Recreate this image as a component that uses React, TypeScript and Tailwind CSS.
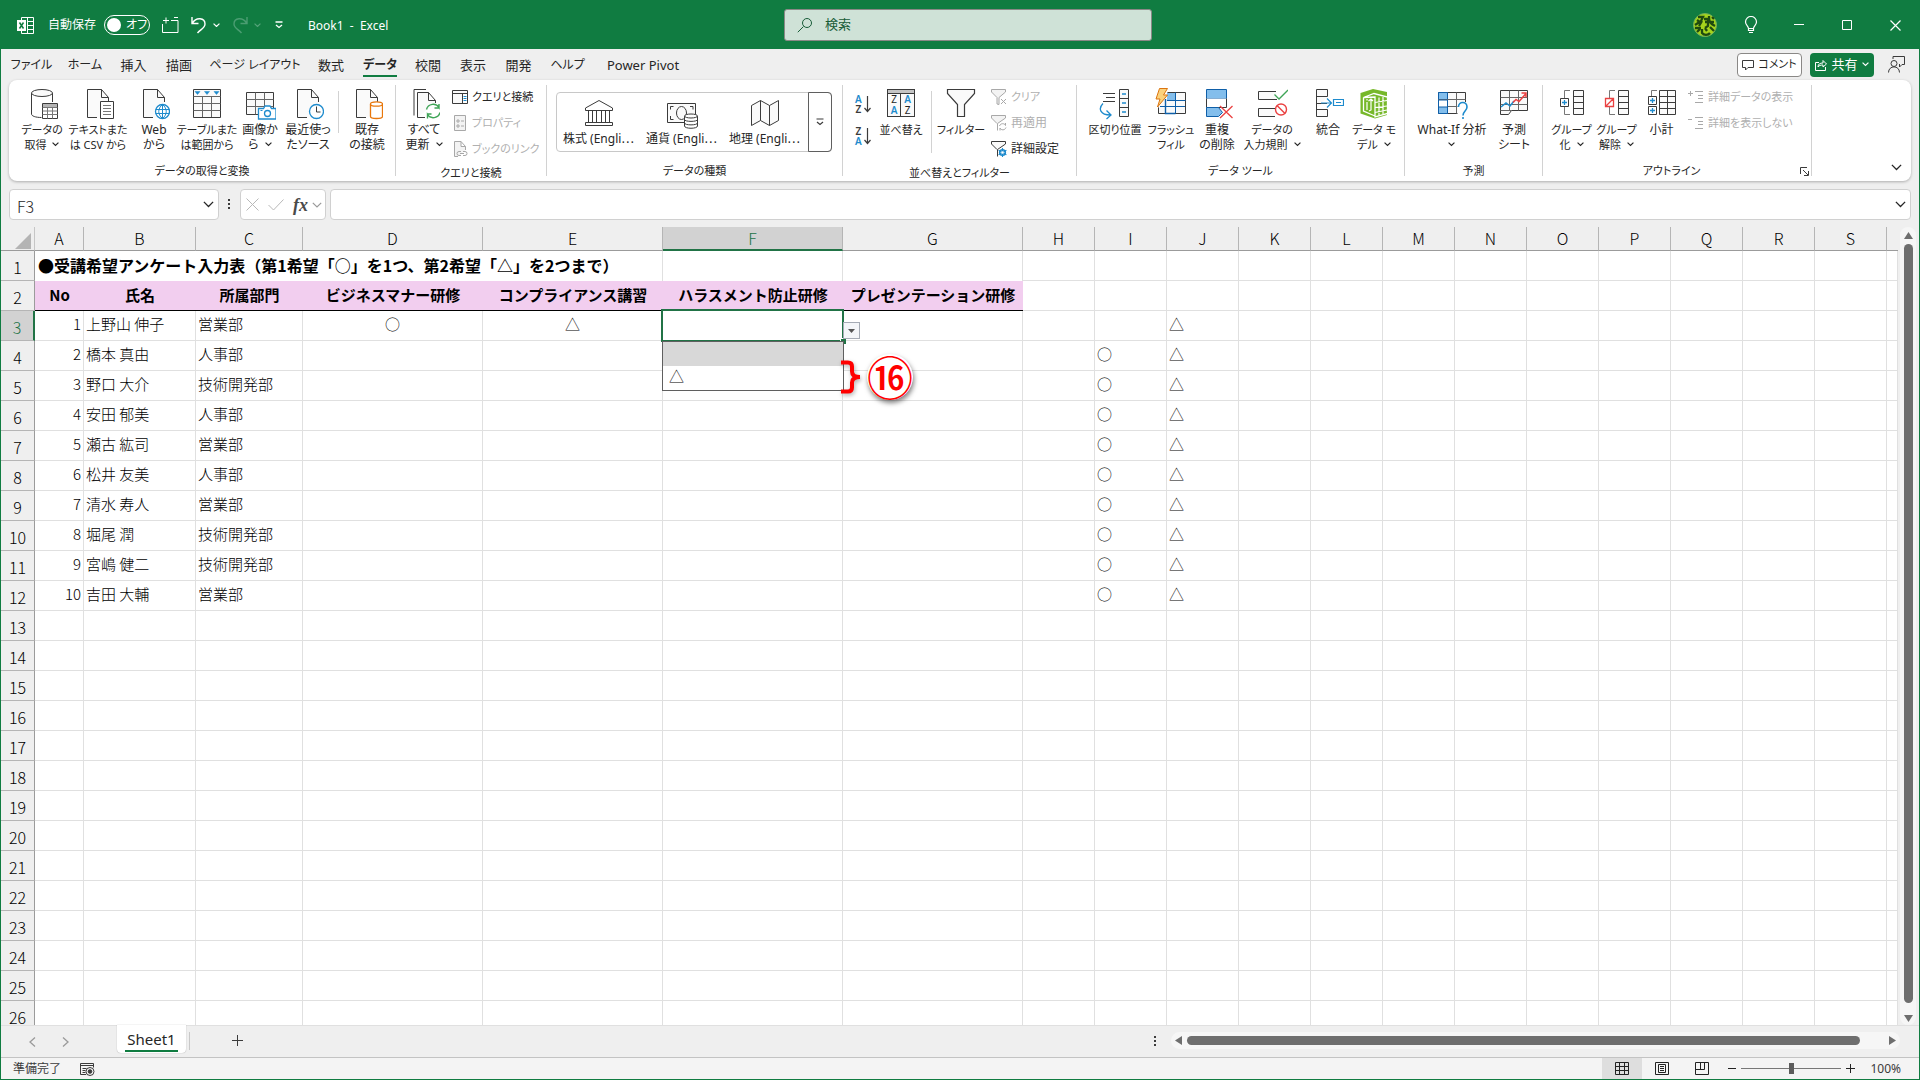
import type { ReactNode } from 'react';

type IconProps = { children: ReactNode; w?: number; h?: number; color?: string; className?: string };

function Icon({ children, w = 32, h = 32, color = '#3b3b3b', className = '' }: IconProps) {
  return (
    <svg width={w} height={h} viewBox={`0 0 ${w} ${h}`} fill="none" stroke={color} className={`shrink-0 ${className}`} aria-hidden>
      {children}
    </svg>
  );
}

function Chevron({ className = '', w = 7 }: { className?: string; w?: number }) {
  return (
    <svg
      width={w}
      height={w * 0.6}
      viewBox="0 0 10 6"
      fill="none"
      stroke="currentColor"
      strokeWidth={w > 8 ? 1.2 : 1.7}
      className={`inline-block shrink-0 ${className}`}
      aria-hidden
    >
      <path d="M.8.8 5 5 9.2.8" />
    </svg>
  );
}

function Doc() {
  return (
    <>
      <path d="M5.5 1.5H19.5L26.5 9.5V29.5H5.5Z" fill="#fafafa" stroke="none" />
      <path d="M15 29.5H5.5V1.5H19.5L26.5 9.5V14" />
      <path d="M19.5 1.5V9.5H26.5" />
    </>
  );
}

const icons = {
  getData: (
    <Icon>
      <path d="M5.5 5v21c0 2 4 3.500 10 3.500M26.500 5v9" />
      <ellipse cx="16" cy="5" rx="10.500" ry="3.500" fill="#fafafa" />
      <path d="M16.500 15.500h15v15h-15z" fill="#fff" />
      <path d="M17 16h14v3H17z" fill="#b5b5b5" stroke="none" />
      <path d="M16.500 19.500h15M16.500 23h15M16.500 26.500h15M21.500 19.500v11M26.500 19.500v11" stroke="#777" />
    </Icon>
  ),
  textCsv: (
    <Icon>
      <Doc />
      <path d="M18.500 13.500h13v17h-13z" fill="#fff" />
      <path d="M21 17.500h8M21 20.500h8M21 23.500h8M21 26.500h8" stroke="#777" />
    </Icon>
  ),
  web: (
    <Icon>
      <Doc />
      <circle cx="24.500" cy="23.500" r="7" fill="#fff" stroke="#1e8bcd" strokeWidth="1.300" />
      <path d="M24.500 16.500v14M17.500 21.500h14M17.500 25.500h14M24.500 16.500c-5 4-5 10 0 14c5-4 5-10 0-14" stroke="#1e8bcd" />
    </Icon>
  ),
  table: (
    <Icon>
      <path d="M2.500 1.500h27v28h-27z" fill="#fafafa" />
      <path d="M2.500 8.500h27M2.500 15.500h27M2.500 22.500h27M11.500 8v21M20.500 8v21" stroke="#666" />
      <path d="M4 3.500h5l-2.500 3zM13.500 3.500h5l-2.500 3zM23 3.500h5l-2.500 3z" fill="#1e8bcd" stroke="#1e8bcd" strokeWidth=".5" />
    </Icon>
  ),
  picture: (
    <Icon>
      <path d="M2.500 4.500h27v22h-27z" fill="#fafafa" />
      <path d="M2.500 11.500h27M2.500 18.500h27M11.500 4.500v22M20.500 4.500v22" stroke="#666" />
      <path d="M14.500 20.500h5l1.500-2.500h5l1.500 2.500h4.500v10.500h-17.500z" fill="#fff" stroke="#1e8bcd" strokeWidth="1.300" />
      <circle cx="23.500" cy="25.500" r="3" stroke="#1e8bcd" strokeWidth="1.300" />
      <path d="M16.500 22.500h2" stroke="#1e8bcd" />
    </Icon>
  ),
  recent: (
    <Icon>
      <Doc />
      <circle cx="24.500" cy="23.500" r="7" fill="#fff" stroke="#1e8bcd" strokeWidth="1.300" />
      <path d="M24.500 18.500v5.500h4" />
    </Icon>
  ),
  existing: (
    <Icon>
      <Doc />
      <path d="M19.500 16v12.500c0 1.500 3 2 6 2s6-.5 6-2V16" fill="#fff" stroke="#e8770c" strokeWidth="1.300" />
      <ellipse cx="25.500" cy="16" rx="6" ry="2.200" fill="#fff" stroke="#e8770c" strokeWidth="1.300" />
    </Icon>
  ),
  refreshAll: (
    <Icon>
      <path d="M6 27.500V1.500H18" />
      <path d="M9.500 29.500V4.500H20.500L27.500 12.500V15M20.500 4.500V12.500H27.500M9.500 29.500H17" fill="#fafafa" />
      <path d="M18.500 21.500c1.500-6 9.500-7 12.500-2v-3.500M31 20h-4.500M32 24.500c-1.500 6-9.500 7-12.500 2v4M19 26h4.500" stroke="#3fa557" strokeWidth="1.400" />
    </Icon>
  ),
  bank: (
    <Icon>
      <path d="M2.500 13.500v-2.500L16 3.500l13.500 7.500v2.500zM5.500 13.500v12M9.500 13.500v12M13.500 13.500v12M18.500 13.500v12M22.500 13.500v12M26.500 13.500v12M2.500 28.500v-3h27v3z" />
    </Icon>
  ),
  currency: (
    <Icon>
      <path d="M1.500 6.500h28v19h-28z" fill="#fafafa" />
      <path d="M7.500 9.500h-3v3M4.500 19v3.500h3M24 9.500h3v3" />
      <ellipse cx="15.500" cy="16" rx="5" ry="6.500" />
      <path d="M18.500 19v10c0 3 13 3 13 0V19" fill="#fff" />
      <path d="M18.500 22.500c0 2.500 13 2.500 13 0M18.500 26c0 2.500 13 2.500 13 0" />
      <ellipse cx="25" cy="19" rx="6.500" ry="2" fill="#fff" />
    </Icon>
  ),
  map: (
    <Icon>
      <path d="M2.500 8.500 11.500 3.500 20.500 8.500 29.500 3.500V23.500L20.500 28.500 11.500 23.500 2.500 28.500ZM11.500 3.500v20M20.500 8.500v20" fill="#fafafa" />
    </Icon>
  ),
  filter: (
    <Icon>
      <path d="M2.500 1.500h27v4l-10 11v12h-7v-12l-10-11z" fill="#fafafa" strokeWidth="1.200" />
    </Icon>
  ),
  textToColumns: (
    <Icon>
      <path d="M4 5.500h12M7 9.500h9M4 13.500h12" />
      <path d="M4 15.500c-5 5-3 11.500 7.500 11.500M7.500 22.500l4.500 4.500-4.500 4" stroke="#1e8bcd" strokeWidth="1.300" />
      <path d="M20.500 1.500h9v27h-9zM20.500 10.500h9M20.500 19.500h9" fill="#fafafa" />
      <path d="M23 6h4M23 15h4M23 24h4" stroke="#1e8bcd" strokeWidth="1.300" />
    </Icon>
  ),
  flashFill: (
    <Icon>
      <path d="M3.500 4.500h27v21h-27z" fill="#fafafa" />
      <path d="M0 0h15L3.500 20z" fill="#fff" stroke="none" />
      <path d="M12 5h9v7h-9z" fill="#83beec" stroke="none" />
      <path d="M12 12.500h18.500M5 18.500h25M20.500 4.500v21" stroke="#0f5fa8" />
      <path d="M10.500 11v14.500h10" stroke="#0f5fa8" strokeWidth="1.400" />
      <path d="M4.500.5h8l-4 6.500h4L2.500 19l2.500-8H1z" fill="#fad27d" stroke="#dc7410" />
    </Icon>
  ),
  removeDuplicates: (
    <Icon>
      <path d="M5.500 1.500h20v9h-20z" fill="#83beec" stroke="#0f5fa8" />
      <path d="M5.500 10.500v9h20v-9" fill="#fff" />
      <path d="M5.500 19.500h12l4 5-4 4h-12z" fill="#83beec" stroke="#0f5fa8" />
      <path d="M19 18l12.500 12M31.500 18 19 30" stroke="#ea4141" strokeWidth="1.300" />
    </Icon>
  ),
  validation: (
    <Icon>
      <path d="M21 11.500H2.500V3.500H20M20 20.500H2.500v8H19" fill="#fafafa" />
      <path d="M18.500 6.500 23 11 32 2" stroke="#3fa557" strokeWidth="1.300" />
      <circle cx="25" cy="21.500" r="5.500" fill="#fff" stroke="#ea4141" strokeWidth="1.400" />
      <path d="M21 17.500l8 8" stroke="#ea4141" strokeWidth="1.400" />
    </Icon>
  ),
  consolidate: (
    <Icon>
      <path d="M15.500 8.500v-7H4.500v27h11v-7H4.500M15.500 8.500H4.500M15 15.500H5" fill="#fafafa" />
      <path d="M9 15h10M15 10.500l4.500 4.500-4.500 4.500M21.500 11.500h10v6h-10zM24 14.500h5" stroke="#1e8bcd" strokeWidth="1.200" />
    </Icon>
  ),
  dataModel: (
    <Icon>
      <path d="M2.500 5 15 1l14 3v23L17 30.500l-14.500-5z" fill="#77b82a" stroke="none" />
      <path d="M5.500 9.500 16 5.500l13.500 3.500v16.500L17 29V9zM5.500 9.500v13.500L17 28" stroke="#fff" strokeWidth="1.300" />
      <path d="M9 14v8M9 11v1.500M13 11v11l-2 1M10.500 13l2.500-2 2 2M21 9.500v18M25 9v17M17 14.500l12-2M17 19.500l12-1.500M17 24.500l12-2.500" stroke="#fff" strokeWidth="1.200" />
    </Icon>
  ),
  whatIf: (
    <Icon>
      <path d="M2.500 4.500h27v21h-27z" fill="#fafafa" />
      <path d="M2.500 4.500h9v21h-9z" fill="#83beec" stroke="#0f5fa8" />
      <path d="M2.500 11.500h27M2.500 18.500h27M20.500 4.500v21" stroke="#666" />
      <path d="M2.500 12h9v7h-9z" fill="#fff" stroke="#0f5fa8" />
      <path d="M21.500 14h10v17h-10z" fill="#fff" stroke="none" />
      <path d="M22.500 19c0-6 8.500-6 8.500 0 0 4-4 4-4 8.500M27 29v2" stroke="#1e8bcd" strokeWidth="1.600" />
    </Icon>
  ),
  forecast: (
    <Icon>
      <path d="M2.500 2.500h27v20h-16l-3 4h-8z" fill="#fafafa" />
      <path d="M2.500 9.500h27M2.500 16.500h27M11.500 2.500v20M20.500 2.500v20M2.500 22.500h11" stroke="#666" />
      <path d="M3 19l5-4 4 3 4-5" stroke="#1e8bcd" strokeWidth="1.500" />
      <path d="M15 14.500l3-3 3 2 7-8M23.500 5h4.500v4.500" stroke="#ea4141" strokeWidth="1.500" />
    </Icon>
  ),
  group: (
    <Icon>
      <path d="M14 2.500H8.500V10M14 26.500H8.500V19" stroke="#777" />
      <path d="M17.500 2.500h10v24h-10zM17.500 8.500h10M17.500 14.500h10M17.500 20.500h10" fill="#fafafa" />
      <path d="M4.500 10.500h8v8h-8z" fill="#fff" />
      <path d="M6 14.500h5M8.500 12v5" stroke="#1e8bcd" strokeWidth="1.300" />
    </Icon>
  ),
  ungroup: (
    <Icon>
      <path d="M14 2.500H8.500V10M14 26.500H8.500V19" stroke="#777" />
      <path d="M17.500 2.500h10v24h-10zM17.500 8.500h10M17.500 14.500h10M17.500 20.500h10" fill="#fafafa" />
      <path d="M4.500 10.500h8v8h-8zM4.500 18.500l8-8" fill="#fff" stroke="#ea4141" strokeWidth="1.300" />
    </Icon>
  ),
  subtotal: (
    <Icon>
      <path d="M11 2.500H5.500V8" stroke="#777" />
      <path d="M13.500 2.500h16v24h-16zM13.500 8.500h16M13.500 14.500h16M13.500 20.500h16M21.500 2.500v24" fill="#fafafa" />
      <path d="M2.500 8.500h8v8h-8zM2.500 18.500h8v8h-8z" fill="#fff" />
      <path d="M4 12.500h5M6.500 10v5M4 22.500h5M6.500 20v5" stroke="#1e8bcd" strokeWidth="1.300" />
    </Icon>
  ),
};

const smallIcons = {
  queries: (
    <Icon w={16} h={16}>
      <path d="M.5 1.500h15v13H.5zM.5 4.500h15M10.500 4.500v10" fill="#fafafa" />
      <path d="M11 5h4v9h-4z" fill="#fff" stroke="none" />
      <path d="M11.500 7.500h3M11.500 9.500h3M11.500 11.500h3" stroke="#1e8bcd" />
    </Icon>
  ),
  properties: (
    <Icon w={16} h={16} color="#a8a8a8">
      <path d="M2.500.5h11v15h-11z" fill="#f3f3f3" />
      <path d="M5 5h2v2H5zM5 10h2v2H5zM9 6h3M9 11h3" />
    </Icon>
  ),
  links: (
    <Icon w={16} h={16} color="#a8a8a8">
      <path d="M6 15.500H2.500V.5H9l4.500 5V9M9 .5v5h4.500" fill="#f3f3f3" />
      <path d="M9 10.500H7a2 2 0 0 0 0 4h2M11 10.500h2a2 2 0 0 1 0 4h-2M8 12.500h4" />
    </Icon>
  ),
  clear: (
    <Icon w={16} h={16} color="#a8a8a8">
      <path d="M8 15.500V8.500L14.500 3V.5H.5V3L6 8.500v6.500z" fill="#f3f3f3" />
      <path d="M10 10l5 5M15 10l-5 5" />
    </Icon>
  ),
  reapply: (
    <Icon w={16} h={16} color="#a8a8a8">
      <path d="M6.500 15.500V8.500L14.500 3V.5H.5V3L6 8.500" fill="#f3f3f3" />
      <path d="M8.500 11c1-3 5-3 6-.5V8M15 12.500c-1 3-5 3-6 .5v2.500" />
    </Icon>
  ),
  advanced: (
    <Icon w={16} h={16}>
      <path d="M6.500 15.500V8.500L14.500 3V.5H.5V3L6 8.500" fill="#fafafa" />
      <circle cx="11.500" cy="11.500" r="2.800" stroke="#1e8bcd" strokeWidth="1.600" />
      <path d="M11.500 7v9M7.600 9.300l7.800 4.400M7.600 13.700l7.800-4.400" stroke="#1e8bcd" strokeWidth="1.100" />
      <circle cx="11.500" cy="11.500" r="1.200" fill="#fff" stroke="none" />
    </Icon>
  ),
  showDetail: (
    <Icon w={16} h={16} color="#a8a8a8">
      <path d="M0 4.500h5M2.500 2v5M7 2.500h8M10 6.500h5M10 9.500h5M7 13.500h8" />
    </Icon>
  ),
  hideDetail: (
    <Icon w={16} h={16} color="#a8a8a8">
      <path d="M0 4.500h4M7 2.500h8M10 6.500h5M10 9.500h5M7 13.500h8" />
    </Icon>
  ),
};

type BigButtonProps = { icon: ReactNode; lines: string[]; menu?: boolean; className: string };

function BigButton({ icon, lines, menu, className }: BigButtonProps) {
  return (
    <button type="button" className={`flex shrink-0 flex-col items-center ${className}`}>
      {icon}
      <span className="mt-0.5 flex flex-col items-center leading-[15px] whitespace-nowrap">
        {lines.map((line, i) => (
          <span key={i} className="flex h-[15px] items-center gap-1.5">
            {line}
            {menu && i === lines.length - 1 && <Chevron />}
          </span>
        ))}
      </span>
    </button>
  );
}

type SmallButtonProps = { icon: ReactNode; label: string; disabled?: boolean; className?: string };

function SmallButton({ icon, label, disabled, className = '' }: SmallButtonProps) {
  return (
    <button type="button" disabled={disabled} className={`flex h-[26px] items-center gap-1 whitespace-nowrap disabled:text-[#b0b0b0] ${className}`}>
      {icon}
      {label}
    </button>
  );
}

function RibbonGroup({ label, className, children, launcher }: { label: string; className: string; children: ReactNode; launcher?: boolean }) {
  return (
    <>
      <section aria-label={label} className={`flex shrink-0 flex-col ${className}`}>
        <div className="flex flex-1 items-start pt-2">{children}</div>
        <div className="flex h-[22px] items-center pt-0.5">
          <span className="flex-1 text-center text-[11px] leading-4">{label}</span>
          {launcher && (
            <button type="button" aria-label="アウトラインの設定" className="mr-0.5">
              <Icon w={9} h={9}>
                <path d="M.5 7V.5H7M3 3l5 5M8.500 4v4.500H4" />
              </Icon>
            </button>
          )}
        </div>
      </section>
      <div className="my-[5px] w-px shrink-0 bg-[#d2d2d2]" />
    </>
  );
}

const tabs = [
  { label: 'ファイル', w: 'w-[55px] text-xs' },
  { label: 'ホーム', w: 'w-[52px] text-xs' },
  { label: '挿入', w: 'w-[45px]' },
  { label: '描画', w: 'w-[46px]' },
  { label: 'ページ レイアウト', w: 'w-[106px] text-xs' },
  { label: '数式', w: 'w-[46px]' },
  { label: 'データ', w: 'w-[52px] text-xs' },
  { label: '校閲', w: 'w-[44px]' },
  { label: '表示', w: 'w-[46px]' },
  { label: '開発', w: 'w-[45px]' },
  { label: 'ヘルプ', w: 'w-[53px] text-xs' },
  { label: 'Power Pivot', w: 'w-[98px]' },
];

function TitleBar() {
  return (
    <header className="flex h-12 shrink-0 items-center bg-[#107c41] text-xs text-white">
      <div className="flex flex-1 items-center">
        <Icon w={17} h={17} color="#fff" className="ml-4">
          <path d="M4.500 3V.5h12v16h-12V14M10.500.5v16M10 4.500h6.500M10 8.500h6.500M10 12.500h6.500" />
          <path d="M0 3h9v11H0z" fill="#fff" stroke="none" />
          <path d="M2.500 5.500l4 6M6.500 5.500l-4 6" stroke="#107c41" strokeWidth="1.500" />
        </Icon>
        <label className="ml-[14px] flex items-center gap-2">
          自動保存
          <span className="relative flex h-5 w-[46px] items-center rounded-full border border-white">
            <input type="checkbox" role="switch" className="absolute inset-0 appearance-none" />
            <span className="ml-[2px] size-[14px] rounded-full bg-white" />
            <span className="ml-[5px] whitespace-nowrap">オフ</span>
          </span>
        </label>
        <button type="button" aria-label="新しいウィンドウ" className="ml-3">
          <Icon w={17} h={17} color="#fff">
            <path d="M.5 7v8.500h15.500V3.500H9M1 3.500h6M4 .5v6M12 .500h4" />
          </Icon>
        </button>
        <button type="button" aria-label="元に戻す" className="ml-3 flex items-center gap-1.5">
          <Icon w={16} h={18} color="#fff">
            <path d="M1 1v6.500h6.500M1.500 7C5 1 14 1.500 14 8c0 4-4 5-7.500 9" strokeWidth="1.400" />
          </Icon>
          <Chevron />
        </button>
        <button type="button" aria-label="やり直し" disabled className="ml-3 flex items-center gap-1.5 text-[#55a37a]">
          <Icon w={16} h={18} color="#4b9d72">
            <path d="M15 1v6.500H8.500M14.500 7C11 1 2 1.500 2 8c0 4 4 5 7.500 9" strokeWidth="1.400" />
          </Icon>
          <Chevron />
        </button>
        <button type="button" aria-label="クイック アクセス ツール バーのユーザー設定" className="ml-[14px]">
          <Icon w={8} h={8} color="#fff">
            <path d="M.5 1h7M1 4l3 2.500L7 4" strokeWidth="1.300" />
          </Icon>
        </button>
        <h1 className="ml-[25px] pt-0.5 whitespace-pre">Book1  -  Excel</h1>
      </div>
      <label className="ml-4 flex h-8 w-[368px] shrink-0 items-center gap-3 rounded-[3px] border border-[#8a8886] bg-[#cfe2d7] px-3 text-[#185c37]">
        <Icon w={16} h={16} color="#185c37">
          <circle cx="10" cy="6" r="4.500" />
          <path d="M6.500 9.500.8 15.200" />
        </Icon>
        <input type="search" placeholder="検索" aria-label="検索" className="w-full bg-transparent text-[13px] outline-none placeholder:text-[#185c37]" />
      </label>
      <div className="flex flex-1 items-center justify-end">
        <button type="button" aria-label="アカウント" className="mr-[10px]">
          <svg width="24" height="24" viewBox="0 0 24 24" fill="none" aria-hidden>
            <circle cx="12" cy="12" r="11.500" fill="#a5d41c" stroke="#6fae5c" />
            <path
              d="M5 4h5l-2 4-6 4M4 7l4 3M9 8l-3 5M11 6h4v7l-3 2M12 9h9M16 3c0 5 0 7 6 10M19 4l2 2M2 15h6M4 19l3-3M9 16v4c2 2.500 6 2.500 8 0M12 15l2 3M17 14l4 4"
              stroke="#1f4a10"
              strokeWidth="2.300"
            />
          </svg>
        </button>
        <button type="button" aria-label="ヒント" className="flex w-12 justify-center">
          <Icon w={14} h={18} color="#fff">
            <path d="M4.500 12.500C4.500 10 1.500 9 1.500 6a5.500 5.500 0 0 1 11 0c0 3-3 4-3 6.500zM4.500 12.500v2h5v-2M5 16.500h4" strokeWidth="1.200" />
          </Icon>
        </button>
        <button type="button" aria-label="最小化" className="flex w-12 justify-center">
          <Icon w={10} h={10} color="#fff"><path d="M0 4.500h10" /></Icon>
        </button>
        <button type="button" aria-label="最大化" className="flex w-12 justify-center">
          <Icon w={10} h={10} color="#fff"><path d="M.5.5h9v9h-9z" /></Icon>
        </button>
        <button type="button" aria-label="閉じる" className="flex w-12 justify-center">
          <Icon w={11} h={11} color="#fff"><path d="M.5.5l10 10M10.500.5l-10 10" strokeWidth="1.200" /></Icon>
        </button>
      </div>
    </header>
  );
}

function TabRow() {
  return (
    <nav className="flex h-[31px] shrink-0 items-center pr-[10px] pl-[3px] text-[13px]">
      {tabs.map((tab) => (
        <button key={tab.label} type="button" className={`flex h-full shrink-0 justify-center whitespace-nowrap ${tab.w}`}>
          <span
            className={
              tab.label === 'データ' ? 'mt-[6px] h-[22px] border-b-2 border-[#107c41] leading-5 font-semibold' : 'mt-[6px] leading-5'
            }
          >
            {tab.label}
          </span>
        </button>
      ))}
      <div className="ml-auto flex items-center gap-2">
        <button type="button" className="flex h-6 w-[65px] items-center justify-center gap-1 rounded border border-[#8a8886] bg-white text-[11px] whitespace-nowrap">
          <Icon w={12} h={12}><path d="M.5 1.500h11v7H6L3.500 11V8.500h-3z" /></Icon>
          コメント
        </button>
        <button type="button" className="flex h-6 w-16 items-center justify-center gap-1 rounded bg-[#107c41] text-[13px] text-white">
          <Icon w={12} h={12} color="#fff"><path d="M4 3.500H.5v8h10V8M3 8c0-3 2-4 5-4V1.500L11.500 5 8 8V6C5.500 6 4 6.500 3 8z" /></Icon>
          共有
          <Chevron />
        </button>
        <button type="button" aria-label="プレゼンス" className="ml-[6px] mr-1">
          <Icon w={17} h={17}>
            <circle cx="6" cy="7.500" r="3" />
            <path d="M.5 16.500c0-7.500 11-7.500 11 0M5 3V.5h11.500v8H14l-2.500 2.500V8" />
          </Icon>
        </button>
      </div>
    </nav>
  );
}

function SortIcon({ top, bottom }: { top: string; bottom: string }) {
  const color = (c: string) => (c === 'A' ? 'text-[#1e8bcd]' : 'text-[#3b3b3b]');
  return (
    <button type="button" aria-label={`${top}${bottom}で並べ替え`} className="flex h-8 items-center text-[10px] leading-[10px] font-semibold">
      <span className="flex flex-col">
        <span className={color(top)}>{top}</span>
        <span className={color(bottom)}>{bottom}</span>
      </span>
      <Icon w={9} h={17}><path d="M5.500 0v15.500M2.500 12l3 3.500 3-3.500" strokeWidth="1.200" /></Icon>
    </button>
  );
}

function SortDialogIcon() {
  return (
    <span className="mt-px mb-[3px] block h-7 w-7 border border-[#3b3b3b] bg-[#fafafa] text-[10px] leading-[11px]">
      <span className="block h-1 border-b border-[#3b3b3b] bg-[#c4c4c4]" />
      <span className="grid h-[22px] grid-cols-2 text-center">
        <span className="border-r border-[#3b3b3b]">Z</span>
        <span className="font-semibold text-[#1e8bcd]">A</span>
        <span className="border-r border-[#3b3b3b] font-semibold text-[#1e8bcd]">A</span>
        <span>Z</span>
      </span>
    </span>
  );
}

function Ribbon() {
  return (
    <div className="mx-2 flex h-[101px] shrink-0 rounded-lg bg-white text-xs shadow-[0_1px_3px_rgba(0,0,0,0.28)]">
      <RibbonGroup label="データの取得と変換" className="w-[386px]">
        <BigButton icon={icons.getData} lines={['データの', '取得']} menu className="ml-[5px] w-14 text-[11px]" />
        <BigButton icon={icons.textCsv} lines={['テキストまた', 'は CSV から']} className="w-14 text-[11px]" />
        <BigButton icon={icons.web} lines={['Web', 'から']} className="w-14" />
        <BigButton icon={icons.table} lines={['テーブルまた', 'は範囲から']} className="w-[50px] text-[11px]" />
        <BigButton icon={icons.picture} lines={['画像か', 'ら']} menu className="w-14" />
        <BigButton icon={icons.recent} lines={['最近使っ', 'たソース']} className="w-10" />
        <div className="mx-[10px] mt-[3px] h-[42px] w-px bg-[#d2d2d2]" />
        <BigButton icon={icons.existing} lines={['既存', 'の接続']} className="w-9" />
      </RibbonGroup>

      <RibbonGroup label="クエリと接続" className="w-[150px]">
        <BigButton icon={icons.refreshAll} lines={['すべて', '更新']} menu className="ml-1 w-12" />
        <div className="-mt-1 ml-1 flex flex-col text-[11px]">
          <SmallButton icon={smallIcons.queries} label="クエリと接続" />
          <SmallButton icon={smallIcons.properties} label="プロパティ" disabled />
          <SmallButton icon={smallIcons.links} label="ブックのリンク" disabled />
        </div>
      </RibbonGroup>

      <RibbonGroup label="データの種類" className="w-[295px]">
        <div className="mt-1 ml-[9px] flex h-[60px] w-[276px] rounded border border-[#c8c8c8]">
          <BigButton icon={icons.bank} lines={['株式 (Engli⋯']} className="w-[83px] pt-1" />
          <BigButton icon={icons.currency} lines={['通貨 (Engli⋯']} className="w-[83px] pt-1" />
          <BigButton icon={icons.map} lines={['地理 (Engli⋯']} className="w-[83px] pt-1" />
          <button type="button" aria-label="その他" className="-my-px -mr-px ml-auto flex w-6 items-center justify-center rounded-r border border-[#5f5f5f]">
            <Icon w={8} h={8}><path d="M.5 1h7M1 4l3 2.500L7 4" strokeWidth="1.200" /></Icon>
          </button>
        </div>
      </RibbonGroup>

      <RibbonGroup label="並べ替えとフィルター" className="w-[233px]">
        <div className="ml-3 flex w-[18px] flex-col">
          <SortIcon top="A" bottom="Z" />
          <SortIcon top="Z" bottom="A" />
        </div>
        <BigButton icon={<SortDialogIcon />} lines={['並べ替え']} className="ml-1 w-12 text-[11px]" />
        <div className="mr-[5px] ml-[6px] mt-[3px] h-[62px] w-px bg-[#d2d2d2]" />
        <BigButton icon={icons.filter} lines={['フィルター']} className="w-12 text-[11px]" />
        <div className="-mt-1 ml-[6px] flex flex-col">
          <SmallButton icon={smallIcons.clear} label="クリア" disabled className="text-[11px]" />
          <SmallButton icon={smallIcons.reapply} label="再適用" disabled />
          <SmallButton icon={smallIcons.advanced} label="詳細設定" />
        </div>
      </RibbonGroup>

      <RibbonGroup label="データ ツール" className="w-[327px]">
        <BigButton icon={icons.textToColumns} lines={['区切り位置']} className="ml-2 w-[60px] text-[11px]" />
        <BigButton icon={icons.flashFill} lines={['フラッシュ', 'フィル']} className="w-[52px] text-[11px]" />
        <BigButton icon={icons.removeDuplicates} lines={['重複', 'の削除']} className="w-10" />
        <BigButton icon={icons.validation} lines={['データの', '入力規則']} menu className="w-[70px] text-[11px]" />
        <BigButton icon={icons.consolidate} lines={['統合']} className="w-[42px]" />
        <BigButton icon={icons.dataModel} lines={['データ モ', 'デル']} menu className="w-[50px] text-[11px]" />
      </RibbonGroup>

      <RibbonGroup label="予測" className="w-[137px]">
        <BigButton icon={icons.whatIf} lines={['What-If 分析', '']} menu className="ml-[7px] w-20" />
        <BigButton icon={icons.forecast} lines={['予測', 'シート']} className="w-11" />
      </RibbonGroup>

      <RibbonGroup label="アウトライン" className="w-[268px]" launcher>
        <BigButton icon={icons.group} lines={['グループ', '化']} menu className="ml-[6px] w-[45px] text-[11px]" />
        <BigButton icon={icons.ungroup} lines={['グループ', '解除']} menu className="w-[45px] text-[11px]" />
        <BigButton icon={icons.subtotal} lines={['小計']} className="w-[45px]" />
        <div className="-mt-1 ml-1 flex flex-col">
          <SmallButton icon={smallIcons.showDetail} label="詳細データの表示" disabled className="text-[11px]" />
          <SmallButton icon={smallIcons.hideDetail} label="詳細を表示しない" disabled className="text-[11px]" />
        </div>
      </RibbonGroup>

      <button type="button" aria-label="リボンを折りたたむ" className="mt-auto mr-[9px] mb-[10px] ml-auto flex">
        <Chevron w={11} />
      </button>
    </div>
  );
}

function FormulaBar() {
  return (
    <div className="mx-2 mt-2 flex h-[31px] shrink-0 items-center">
      <div className="flex h-full w-[210px] items-center rounded border border-[#d0d0d0] bg-white pr-1">
        <input
          aria-label="名前ボックス"
          defaultValue="F3"
          className="w-full min-w-0 flex-1 bg-transparent pt-0.5 pl-[7px] [font-family:'Noto_Sans_CJK_JP',sans-serif] text-base leading-5 font-light text-[#262626] outline-none"
        />
        <button type="button" aria-label="名前の一覧" className="flex"><Chevron w={11} /></button>
      </div>
      <Icon w={3} h={11} color="none" className="mx-[9px]">
        <path d="M0 0h2v2H0zM0 4h2v2H0zM0 8h2v2H0z" fill="#3b3b3b" />
      </Icon>
      <div className="flex h-full w-[86px] items-center rounded border border-[#d0d0d0] bg-white text-[#9a9a9a]">
        <button type="button" aria-label="キャンセル" className="ml-[5px]">
          <Icon w={13} h={13} color="#b8b8b8"><path d="M.5.5l12 12M12.500.5l-12 12" /></Icon>
        </button>
        <button type="button" aria-label="入力" className="ml-[9px]">
          <Icon w={16} h={12} color="#b8b8b8"><path d="M.5 6 5.500 11 15.500.5" /></Icon>
        </button>
        <button type="button" aria-label="関数の挿入" className="ml-[9px] [font-family:'Liberation_Serif',serif] text-[18px] leading-5 font-bold text-[#4a4a4a] italic">
          fx
        </button>
        <Chevron w={10} className="ml-1" />
      </div>
      <div className="ml-1 flex h-full flex-1 items-center rounded border border-[#d0d0d0] bg-white pr-1">
        <input aria-label="数式バー" className="w-full bg-transparent px-2 outline-none" />
        <button type="button" aria-label="数式バーの展開" className="flex"><Chevron w={11} /></button>
      </div>
    </div>
  );
}

const columns = 'ABCDEFGHIJKLMNOPQRS'.split('');

const columnWidths = [
  'w-[49px]', 'w-[112px]', 'w-[107px]',
  'w-[180px]', 'w-[180px]', 'w-[180px]', 'w-[180px]',
  'w-[72px]', 'w-[72px]', 'w-[72px]', 'w-[72px]', 'w-[72px]', 'w-[72px]',
  'w-[72px]', 'w-[72px]', 'w-[72px]', 'w-[72px]', 'w-[72px]', 'w-[72px]',
];

const headings = ['No', '氏名', '所属部門', 'ビジネスマナー研修', 'コンプライアンス講習', 'ハラスメント防止研修', 'プレゼンテーション研修'];

const people = [
  ['上野山 伸子', '営業部'],
  ['橋本 真由', '人事部'],
  ['野口 大介', '技術開発部'],
  ['安田 郁美', '人事部'],
  ['瀬古 紘司', '営業部'],
  ['松井 友美', '人事部'],
  ['清水 寿人', '営業部'],
  ['堀尾 潤', '技術開発部'],
  ['宮嶋 健二', '技術開発部'],
  ['吉田 大輔', '営業部'],
];

function cellText(row: number, col: string) {
  const person = people[row - 3];
  if (!person) return '';
  if (col === 'A') return String(row - 2);
  if (col === 'B') return person[0];
  if (col === 'C') return person[1];
  if (col === 'D' && row === 3) return '○';
  if (col === 'E' && row === 3) return '△';
  if (col === 'I' && row > 3) return '○';
  if (col === 'J') return '△';
  return '';
}

function alignOf(col: string) {
  if (col === 'A') return 'text-right';
  if (col === 'D' || col === 'E') return 'text-center';
  return 'text-left';
}

// Selection frame, validation list and the numbered callout hang off cell F3.
function ActiveCell() {
  return (
    <>
      <div className="absolute -inset-0.5 z-10 border-2 border-[#217346]" />
      <div className="absolute -right-1 -bottom-1 z-10 size-[6px] border-t border-l border-white bg-[#217346]" />
      <button
        type="button"
        aria-label="リストを開く"
        className="absolute top-[11px] left-[180px] z-20 flex size-[17px] items-center justify-center border border-[#a5abb5] bg-[#f4f6f9]"
      >
        <svg width="7" height="4" viewBox="0 0 7 4" fill="#555" aria-hidden><path d="M0 0h7L3.500 4z" /></svg>
      </button>
      <ul role="listbox" aria-label="選択肢" className="absolute top-[30px] -left-px z-20 h-[50px] w-[182px] border border-[#5f5f5f] bg-white text-[15px]">
        <li role="option" aria-selected="true" className="h-6 bg-[#d8d8d8]" />
        <li role="option" aria-selected="false" className="h-6 pl-[6px] leading-5">△</li>
      </ul>
      <div className="absolute top-[43px] left-[178px] z-30 flex items-center gap-[6px]">
        <svg width="20" height="34" viewBox="0 0 20 34" fill="none" stroke="#f00" strokeWidth="4" className="drop-shadow-[1px_2px_2px_rgba(0,0,0,0.3)]" aria-hidden>
          <path d="M0 2.500h7q4 0 4 4v5q0 5.500 8 5.500q-8 0-8 5.500v5q0 4-4 4H0" />
        </svg>
        <span className="flex size-[46px] items-center justify-center rounded-full bg-white pb-[5px] text-[46px] leading-none font-medium text-[#f00] shadow-[1px_3px_5px_rgba(0,0,0,0.5)]">
          ⑯
        </span>
      </div>
    </>
  );
}

function HeadingRow() {
  return (
    <>
      {headings.map((h) => (
        <td key={h} className="h-[30px] overflow-hidden border-b border-black bg-[#f2ceef] p-0 pb-0.5 text-center font-bold whitespace-nowrap">
          {h}
        </td>
      ))}
      {columns.slice(7).map((c) => (
        <td key={c} className="border-r border-b border-[#e0e0e0] p-0" />
      ))}
    </>
  );
}

function Sheet() {
  const rows = Array.from({ length: 26 }, (_, i) => i + 1);
  return (
    <div className="mt-[7px] flex min-h-0 flex-1">
      <div className="min-w-0 flex-1 overflow-hidden">
        <table className="w-[1897px] table-fixed border-separate border-spacing-0 [font-family:'Noto_Sans_CJK_JP',sans-serif] text-[15px] leading-5 font-light text-black [font-feature-settings:normal]">
          <thead>
            <tr className="text-base font-normal">
              <th className="h-6 w-[34px] border-r border-b border-[#9b9b9b] border-r-[#c6c6c6] p-0">
                <svg width="16" height="16" viewBox="0 0 16 16" fill="#b4b4b4" className="mt-1 mr-[3px] ml-auto" aria-hidden><path d="M16 0v16H0z" /></svg>
              </th>
              {columns.map((c, i) => (
                <th
                  key={c}
                  scope="col"
                  className={`h-6 border-r border-r-[#b5b5b5] p-0 leading-5 font-light ${columnWidths[i]} ${
                    c === 'F' ? 'border-b-2 border-b-[#217346] bg-[#d2d2d2] text-[#217346]' : 'border-b border-b-[#9b9b9b] pb-0.5'
                  }`}
                >
                  {c}
                </th>
              ))}
              <th className="w-[11px] border-b border-b-[#9b9b9b] p-0" />
            </tr>
          </thead>
          <tbody className="bg-white">
            {rows.map((r) => (
              <tr key={r}>
                <th
                  scope="row"
                  className={`h-[30px] border-b border-b-[#b5b5b5] p-0 pt-0.5 text-base leading-5 font-light ${
                    r === 3 ? 'border-r-2 border-r-[#217346] bg-[#d2d2d2] text-[#217346]' : 'border-r border-r-[#9b9b9b] bg-[#efefef]'
                  }`}
                >
                  {r}
                </th>
                {r === 1 && (
                  <>
                    <td colSpan={5} className="border-r border-[#e0e0e0] p-0 pb-[3px] pl-[3px] text-base leading-5 font-bold whitespace-nowrap">
                      ●受講希望アンケート入力表（第1希望「○」を1つ、第2希望「△」を2つまで）
                    </td>
                    {columns.slice(5).map((c) => (
                      <td key={c} className={c < 'H' ? 'border-r border-[#e0e0e0] p-0' : 'border-r border-b border-[#e0e0e0] p-0'} />
                    ))}
                  </>
                )}
                {r === 2 && <HeadingRow />}
                {r > 2 &&
                  columns.map((c) => (
                    <td key={c} className={`relative h-[30px] border-r border-b border-[#e0e0e0] px-[2px] pt-0 pb-[3px] whitespace-nowrap ${alignOf(c)}`}>
                      {cellText(r, c)}
                      {r === 3 && c === 'F' && <ActiveCell />}
                    </td>
                  ))}
                <td className="border-r border-b border-[#e0e0e0] p-0" />
              </tr>
            ))}
          </tbody>
        </table>
      </div>
      <div className="mr-[3px] flex w-4 shrink-0 flex-col items-center rounded-full bg-[#f6f6f6] pt-[5px] pb-[3px]">
        <svg width="9" height="7" viewBox="0 0 9 7" fill="#6e6e6e" aria-hidden><path d="M4.500 0 9 7H0z" /></svg>
        <div className="mt-[5px] mb-3 w-[9px] flex-1 rounded-full bg-[#6e6e6e]" />
        <svg width="9" height="7" viewBox="0 0 9 7" fill="#6e6e6e" aria-hidden><path d="M4.500 7 9 0H0z" /></svg>
      </div>
    </div>
  );
}

function SheetTabs() {
  return (
    <div className="flex h-8 shrink-0 items-start border-t border-[#e0e0e0]">
      <div className="flex h-full w-[116px] items-center gap-[26px] pl-7">
        <button type="button" aria-label="前のシート">
          <Icon w={7} h={10} color="#9a9a9a"><path d="M6 .5 1 5l5 4.500" strokeWidth="1.300" /></Icon>
        </button>
        <button type="button" aria-label="次のシート">
          <Icon w={7} h={10} color="#9a9a9a"><path d="M1 .5 6 5 1 9.500" strokeWidth="1.300" /></Icon>
        </button>
      </div>
      <button type="button" className="-mt-px h-7 w-[69px] rounded-b bg-white px-2 shadow-[0_0_1px_rgba(0,0,0,0.4)]">
        <span className="block h-[25px] border-b-2 border-[#107c41] text-[15px] leading-6">Sheet1</span>
      </button>
      <div className="mt-[6px] ml-[3px] h-[18px] w-px bg-[#c8c8c8]" />
      <button type="button" aria-label="新しいシート" className="mt-[9px] ml-[42px]">
        <Icon w={11} h={11}><path d="M0 5.500h11M5.500 0v11" /></Icon>
      </button>
      <Icon w={3} h={11} color="none" className="mt-[10px] ml-auto">
        <path d="M0 0h2v2H0zM0 4h2v2H0zM0 8h2v2H0z" fill="#3b3b3b" />
      </Icon>
      <div className="mt-[6px] mr-[19px] ml-[14px] flex h-[17px] w-[38%] items-center rounded-full bg-[#f6f6f6] px-1">
        <svg width="7" height="9" viewBox="0 0 7 9" fill="#6e6e6e" aria-hidden><path d="M7 0v9L0 4.500z" /></svg>
        <div className="mr-[29px] ml-[5px] h-[9px] flex-1 rounded-full bg-[#6e6e6e]" />
        <svg width="7" height="9" viewBox="0 0 7 9" fill="#6e6e6e" aria-hidden><path d="M0 0v9l7-4.500z" /></svg>
      </div>
    </div>
  );
}

function StatusBar() {
  return (
    <footer className="flex h-[22px] shrink-0 items-center border-t border-[#c3c3c3] bg-[#f4f4f4] pr-[18px] pl-3 text-xs text-[#3b3b3b]">
      準備完了
      <button type="button" aria-label="マクロの記録" className="ml-[19px]">
        <Icon w={15} h={14}>
          <path d="M6 12.500H.5V1.500h13v4M.5 3.500h13M2.500 6.500h4M2.500 8.500h3M2.500 10.500h3" />
          <circle cx="10" cy="9.500" r="4" />
          <circle cx="10" cy="9.500" r="1.800" fill="#3b3b3b" />
        </Icon>
      </button>
      <div className="ml-auto flex h-full items-center">
        <button type="button" aria-label="標準" className="flex h-full w-10 items-center justify-center bg-[#dedede]">
          <Icon w={14} h={13} color="#222"><path d="M.5.5h13v12H.5zM.5 4.500h13M.5 8.500h13M4.500.5v12M9.500.5v12" /></Icon>
        </button>
        <button type="button" aria-label="ページ レイアウト" className="flex h-full w-10 items-center justify-center">
          <Icon w={14} h={13} color="#222"><path d="M.5.5h13v12H.5zM3.500 2.500h7v8h-7zM5 4.500h4M5 6.500h4M5 8.500h4" /></Icon>
        </button>
        <button type="button" aria-label="改ページ プレビュー" className="flex h-full w-10 items-center justify-center">
          <Icon w={14} h={13} color="#222"><path d="M.5.5h13v12H.5zM5.500.5v7M9.500.5v7M.5 7.500h9" /></Icon>
        </button>
        <button type="button" aria-label="縮小" className="ml-[6px]">
          <Icon w={8} h={9} color="#222"><path d="M0 4.500h8" /></Icon>
        </button>
        <input
          type="range"
          min="0"
          max="100"
          defaultValue="50"
          aria-label="ズーム"
          className="mx-[5px] h-3 w-[100px] appearance-none bg-[linear-gradient(#777,#777)] bg-[length:100%_1px] bg-center bg-no-repeat [&::-webkit-slider-thumb]:h-[11px] [&::-webkit-slider-thumb]:w-[5px] [&::-webkit-slider-thumb]:appearance-none [&::-webkit-slider-thumb]:bg-[#5c5c5c]"
        />
        <button type="button" aria-label="拡大">
          <Icon w={9} h={9} color="#222"><path d="M0 4.500h9M4.500 0v9" /></Icon>
        </button>
        <span className="ml-3 w-[34px] text-right">100%</span>
      </div>
    </footer>
  );
}

export default function App() {
  return (
    <div className="flex h-screen flex-col overflow-hidden border border-[#107c41] bg-[#efefef] [font-family:'Noto_Sans','Noto_Sans_CJK_JP',sans-serif] text-[#262626] [font-feature-settings:'palt']">
      <TitleBar />
      <TabRow />
      <Ribbon />
      <FormulaBar />
      <Sheet />
      <SheetTabs />
      <StatusBar />
    </div>
  );
}
